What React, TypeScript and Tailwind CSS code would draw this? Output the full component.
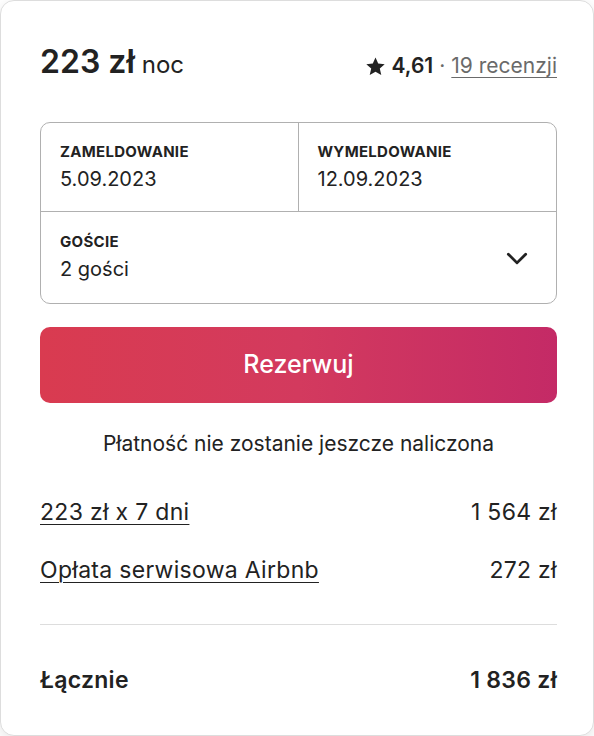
const font = { fontFamily: "Inter, 'Noto Sans', sans-serif" };

function Star() {
  return (
    <svg viewBox="0 0 24 24" className="h-[21px] w-[21px]" fill="#222222">
      <path d="M12 1.8l3.1 6.9 7.4.7-5.6 5 1.7 7.4L12 17.9l-6.6 3.9 1.7-7.4-5.6-5 7.4-.7z" />
    </svg>
  );
}

function Chevron() {
  return (
    <svg viewBox="0 0 24 24" className="h-[26px] w-[26px]" fill="none" stroke="#222222" strokeWidth="2.6" strokeLinecap="round" strokeLinejoin="round">
      <path d="M4 8.5l8 8 8-8" />
    </svg>
  );
}

function Field({ label, value }: { label: string; value: string }) {
  return (
    <div className="flex flex-col pl-[19px] pt-[20px]">
      <span className="text-[15px] font-bold uppercase leading-[18px] tracking-[0.3px] text-[#222222]">{label}</span>
      <span className="mt-[6px] text-[20px] leading-[24px] text-[#222222]">{value}</span>
    </div>
  );
}

function PriceRow({ label, value, strong }: { label: string; value: string; strong?: boolean }) {
  return (
    <div className={`flex items-center justify-between text-[23px] leading-[28px] tracking-[0.3px] text-[#222222] ${strong ? "font-semibold" : ""}`}>
      <span className={strong ? "" : "underline decoration-[1px] underline-offset-[4px]"}>{label}</span>
      <span>{value}</span>
    </div>
  );
}

export default function App() {
  return (
    <div className="h-[736px] w-[594px] bg-white" style={font}>
      <div className="flex h-full flex-col rounded-[14px] border border-[#dddddd] bg-white pl-[39px] pr-[36px] pt-[42px] shadow-[0_4px_14px_rgba(0,0,0,0.10)]">
        <div className="flex items-end justify-between">
          <div className="flex items-baseline text-[#222222]">
            <span className="text-[32px] font-semibold leading-[38px]">223 zł</span>
            <span className="ml-[7px] text-[24px] leading-[38px]">noc</span>
          </div>
          <div className="flex items-center gap-[6px] pb-[5px] text-[21px] leading-[26px]">
            <Star />
            <span className="font-semibold text-[#222222]">4,61</span>
            <span className="text-[#6a6a6a]">·</span>
            <span className="text-[#6a6a6a] underline decoration-[1px] underline-offset-[4px]">19 recenzji</span>
          </div>
        </div>

        <div className="mt-[38px] overflow-hidden rounded-[10px] border border-[#b0b0b0]">
          <div className="grid h-[89px] grid-cols-2 border-b border-[#b0b0b0]">
            <div className="border-r border-[#b0b0b0]">
              <Field label="Zameldowanie" value="5.09.2023" />
            </div>
            <Field label="Wymeldowanie" value="12.09.2023" />
          </div>
          <div className="flex h-[91px] items-center justify-between pr-[26px]">
            <div className="-mt-[1px] flex flex-col pl-[19px]">
              <span className="text-[15px] font-bold uppercase leading-[18px] tracking-[0.3px] text-[#222222]">Goście</span>
              <span className="mt-[6px] text-[20px] leading-[24px] text-[#222222]">2 gości</span>
            </div>
            <Chevron />
          </div>
        </div>

        <button className="mt-[23px] flex h-[76px] items-center justify-center rounded-[10px] bg-[linear-gradient(90deg,#d93b50_0%,#d33a5e_50%,#c42a66_100%)] text-[25px] font-medium text-white">
          Rezerwuj
        </button>

        <p className="mt-[27px] text-center text-[21px] leading-[28px] text-[#222222]">
          Płatność nie zostanie jeszcze naliczona
        </p>

        <div className="mt-[40px] flex flex-col gap-[30px]">
          <PriceRow label="223 zł x 7 dni" value="1 564 zł" />
          <PriceRow label="Opłata serwisowa Airbnb" value="272 zł" />
        </div>

        <div className="mt-[40px] border-t border-[#dddddd]" />

        <div className="mt-[41px]">
          <PriceRow label="Łącznie" value="1 836 zł" strong />
        </div>
      </div>
    </div>
  );
}
